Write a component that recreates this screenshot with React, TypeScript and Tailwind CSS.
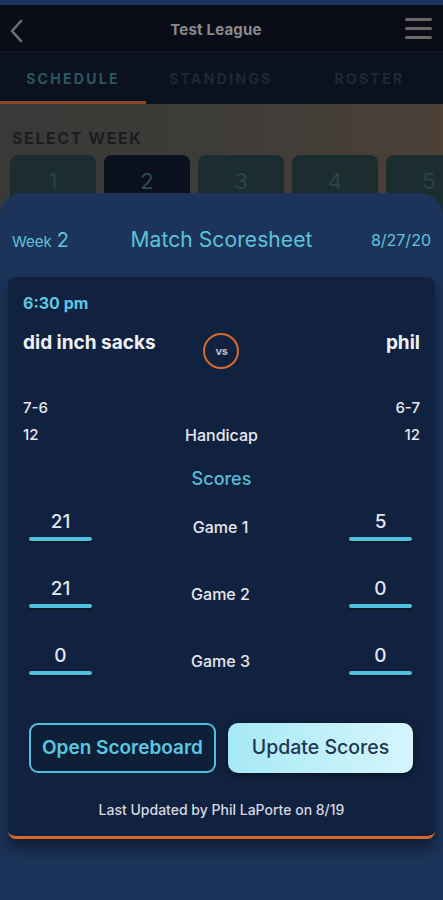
import React from "react";

const font = { fontFamily: 'Inter, "Noto Sans", "Liberation Sans", sans-serif' };

function ScoreInput({ value }: { value: string }) {
  return (
    <div className="w-[63px] flex flex-col items-center">
      <div className="text-[19px] leading-[22px] font-medium text-[#e4e6ee]">{value}</div>
      <div className="mt-[4px] h-[4px] w-full rounded-full bg-[#4fc0de] shadow-[0_1px_2px_rgba(0,0,0,0.5)]" />
    </div>
  );
}

function GameRow({ left, label, right }: { left: string; label: string; right: string }) {
  return (
    <div className="flex items-center justify-between pl-[21px] pr-[23px]">
      <ScoreInput value={left} />
      <div className="text-[16px] leading-[20px] font-medium text-[#e6e7ee] mt-[2px]">{label}</div>
      <ScoreInput value={right} />
    </div>
  );
}

export default function App() {
  const weeks = ["1", "2", "3", "4", "5"];
  return (
    <div style={font} className="relative w-[443px] h-[900px] overflow-hidden bg-[#1b3256]">
      {/* top strip */}
      <div className="h-[5px] bg-[#1b3660]" />
      {/* header */}
      <div className="h-[47px] bg-[#0a0d18] flex items-center justify-between px-[6px] pt-[5px] border-b border-[#161b28]">
        <svg width="20" height="26" viewBox="0 0 20 26" className="ml-[1px]">
          <path d="M14 3 L5 13 L14 23" stroke="#6f6f72" strokeWidth="2.6" fill="none" strokeLinecap="round" strokeLinejoin="round" />
        </svg>
        <div className="text-[15px] font-bold text-[#8a8a8c] tracking-[0.2px]">Test League</div>
        <div className="flex flex-col gap-[6px] mr-[5px] mb-[4px]">
          <div className="w-[27px] h-[3px] rounded-full bg-[#6d6868]" />
          <div className="w-[27px] h-[3px] rounded-full bg-[#6d6868]" />
          <div className="w-[27px] h-[3px] rounded-full bg-[#6d6868]" />
        </div>
      </div>
      {/* tabs */}
      <div className="h-[52px] bg-[#0b111f] flex relative">
        <div className="w-[146px] flex items-center justify-center pt-[3px] text-[14px] font-bold tracking-[2.3px] text-[#2a5760] border-b-[3px] border-[#8a4626]">
          SCHEDULE
        </div>
        <div className="w-[150px] flex items-center justify-center pt-[3px] text-[14px] font-bold tracking-[2.3px] text-[#1a2a36] border-b-[3px] border-transparent">
          STANDINGS
        </div>
        <div className="flex-1 flex items-center justify-center pt-[3px] text-[14px] font-bold tracking-[2.3px] text-[#1a2a36] border-b-[3px] border-transparent">
          ROSTER
        </div>
      </div>
      {/* dimmed content */}
      <div className="h-[200px] bg-gradient-to-r from-[#393937] via-[#3e3c39] to-[#4c4037] pt-[24px]">
        <div className="pl-[12px] text-[16px] font-bold tracking-[1.6px] text-[#1b1d21] leading-[20px]">SELECT WEEK</div>
        <div className="mt-[7px] flex gap-[8px] pl-[10px] overflow-hidden">
          {weeks.map((w) => (
            <div
              key={w}
              className={
                w === "2"
                  ? "shrink-0 w-[86px] h-[60px] rounded-[8px] bg-[#0a101d] flex items-start justify-center pt-[10px] text-[22px] text-[#2b4a56]"
                  : "shrink-0 w-[86px] h-[60px] rounded-[8px] bg-[#1b2d2f] flex items-start justify-center pt-[10px] text-[22px] text-[#2c4345]"
              }
            >
              {w}
            </div>
          ))}
        </div>
      </div>

      {/* bottom sheet overlay */}
      <div className="absolute left-0 right-0 top-[193px] bottom-0 rounded-t-[22px] bg-[#1c3459] flex flex-col">
        <div className="h-[84px] flex items-center justify-between px-[12px] pt-[10px]">
          <div className="flex items-baseline text-[#5ec3dc] w-[80px]">
            <span className="text-[15px]">Week</span>
            <span className="text-[20px] ml-[5px]">2</span>
          </div>
          <div className="text-[21px] text-[#5cc3db] tracking-[0.1px]">Match Scoresheet</div>
          <div className="w-[80px] text-right text-[16px] text-[#5ec3dc]">8/27/20</div>
        </div>

        <div className="mx-[8px] h-[562px] rounded-[8px] bg-[#10223f] border-b-[3px] border-[#d8692c] shadow-[0_10px_14px_rgba(5,12,28,0.55)] flex flex-col">
          <div className="pt-[16px] px-[15px] text-[16px] leading-[20px] font-bold text-[#5ec8e2]">6:30 pm</div>

          <div className="mt-[19px] grid grid-cols-3 items-start px-[15px]">
            <div className="text-[19px] leading-[22px] font-bold text-[#f0f0f6] whitespace-nowrap">did inch sacks</div>
            <div className="flex justify-center">
              <div className="mt-[1px] w-[36px] h-[36px] rounded-full border-[2px] border-[#d6692c] flex items-center justify-center text-[11px] font-bold text-[#b9bcc8] tracking-[-0.3px]">
                vs
              </div>
            </div>
            <div className="text-right text-[19px] leading-[22px] font-bold text-[#f0f0f6]">phil</div>
          </div>

          <div className="mt-[29px] flex justify-between px-[15px] text-[15px] leading-[20px] font-medium text-[#e8e9f0]">
            <span>7-6</span>
            <span>6-7</span>
          </div>
          <div className="mt-[7px] grid grid-cols-3 px-[15px] text-[15px] leading-[20px] font-medium text-[#e8e9f0]">
            <span>12</span>
            <span className="text-center text-[16px]">Handicap</span>
            <span className="text-right">12</span>
          </div>

          <div className="mt-[22px] text-center text-[18px] leading-[24px] font-medium text-[#58bcd6]">Scores</div>

          <div className="mt-[20px] flex flex-col gap-[37px]">
            <GameRow left="21" label="Game 1" right="5" />
            <GameRow left="21" label="Game 2" right="0" />
            <GameRow left="0" label="Game 3" right="0" />
          </div>

          <div className="mt-[48px] flex justify-between pl-[21px] pr-[22px]">
            <div className="w-[187px] h-[50px] rounded-[9px] border-[2px] border-[#4ebfdc] flex items-center justify-center text-[19px] font-semibold text-[#5cc6e0] bg-[#0e2038]">
              Open Scoreboard
            </div>
            <div className="w-[185px] h-[50px] rounded-[10px] bg-gradient-to-r from-[#a5e9f6] to-[#d6f5fb] shadow-[0_2px_6px_rgba(0,0,0,0.5)] flex items-center justify-center text-[19.5px] font-medium text-[#1f3653]">
              Update Scores
            </div>
          </div>

          <div className="mt-[28px] text-center text-[14px] leading-[18px] font-medium text-[#d6d8e2]">
            Last Updated by Phil LaPorte on 8/19
          </div>
        </div>
      </div>
    </div>
  );
}
